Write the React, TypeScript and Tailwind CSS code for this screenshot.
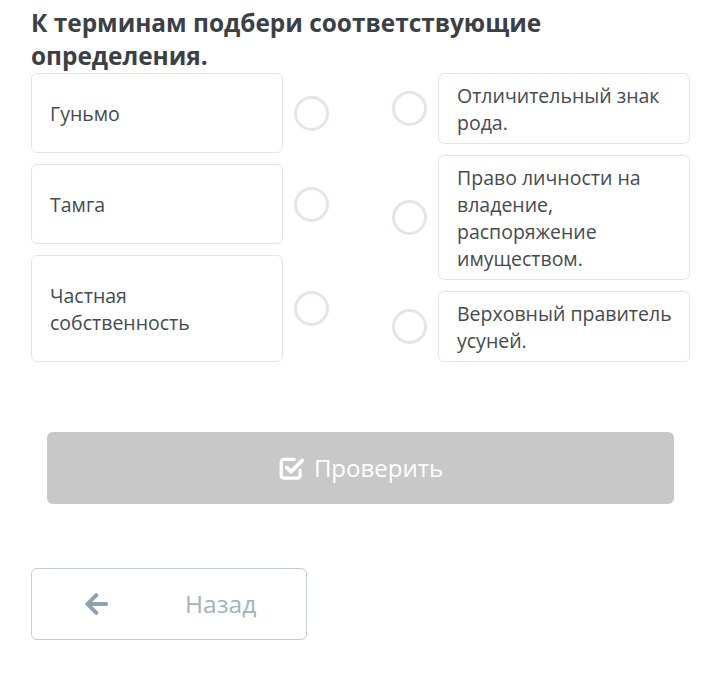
import { FaArrowLeft } from "react-icons/fa"

const terms = ["Гуньмо", "Тамга", "Частная собственность"]
const definitions = [
  "Отличительный знак рода.",
  "Право личности на владение, распоряжение имуществом.",
  "Верховный правитель усуней.",
]

function Circle() {
  return <div className="h-[35px] w-[35px] shrink-0 rounded-full border-[3px] border-[#e1e6e9] bg-white" />
}

function CheckSquare() {
  return (
    <svg width="27" height="25" viewBox="0 0 25 23" fill="none" stroke="currentColor" strokeWidth="3" strokeLinecap="round" strokeLinejoin="round">
      <path d="M15 3H5.5a2.5 2.5 0 0 0-2.5 2.5V18a2.5 2.5 0 0 0 2.5 2.5H18a2.5 2.5 0 0 0 2.5-2.5v-5" />
      <path d="M8 10.5l4 4L22.5 4" strokeWidth="3.5" />
    </svg>
  )
}

export default function App() {
  return (
    <div className="min-h-[674px] w-[720px] bg-white pl-[31px] pr-[30px]" style={{ fontFamily: "'Open Sans', sans-serif" }}>
      {/* Question */}
      <h1 className="pt-[6px] text-[24.4px] font-bold leading-[33px] text-[#3b4045]">
        К терминам подбери соответствующие определения.
      </h1>

      {/* Matching columns */}
      <div className="mt-px flex justify-between">
        <div className="flex flex-col gap-[11px]">
          {terms.map((t) => (
            <div key={t} className="flex items-center gap-[11px]">
              <div className="flex w-[252px] items-center rounded-md border border-[#dfe6e9] px-[18px] py-[25.5px] text-[19.5px] leading-[27px] text-[#454a4f]">
                {t}
              </div>
              <Circle />
            </div>
          ))}
        </div>
        <div className="flex flex-col gap-[11px]">
          {definitions.map((d) => (
            <div key={d} className="flex items-center gap-[11px]">
              <Circle />
              <div className="w-[252px] rounded-md border border-[#dfe6e9] py-[7.5px] pl-[18px] pr-[12px] text-[19.5px] leading-[27px] text-[#454a4f]">
                {d}
              </div>
            </div>
          ))}
        </div>
      </div>

      {/* Check button */}
      <div className="mt-[70px] px-[16px]">
        <button className="flex h-[72px] w-full items-center justify-center gap-[9px] rounded-md bg-[#c8c8c8] text-[24px] text-white">
          <CheckSquare />
          <span>Проверить</span>
        </button>
      </div>

      {/* Back */}
      <div className="mt-[64px]">
        <button className="flex h-[72px] w-[276px] items-center rounded-md border border-[#c3ced4] pl-[53px] text-[24.5px] text-[#a3b2bb]">
          <FaArrowLeft className="h-[26px] w-[23px] text-[#8fa3ae]" />
          <span className="ml-[77px]">Назад</span>
        </button>
      </div>
    </div>
  )
}
